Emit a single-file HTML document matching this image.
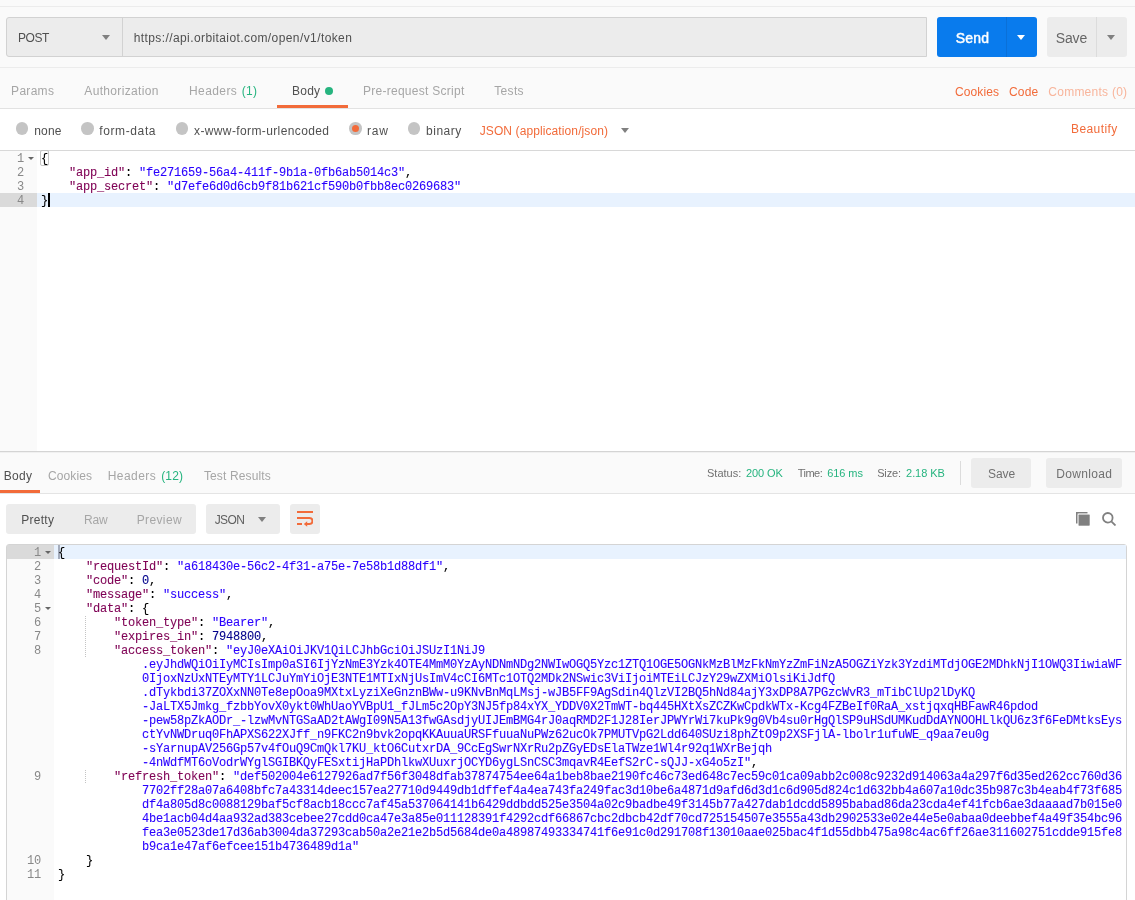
<!DOCTYPE html>
<html lang="en">
<head>
<meta charset="utf-8">
<title>Postman - token request</title>
<style>
html,body{margin:0;padding:0}
body{width:1135px;height:900px;overflow:hidden;position:relative;background:#fff;font-family:"Liberation Sans",Arial,sans-serif;font-size:12px;color:#505050}
.abs,.t,.cl,.ln,.box,.hl{position:absolute}
.t{white-space:pre;line-height:20px;height:20px}
.cl,.ln{font-family:"Liberation Mono",monospace;font-size:12px;letter-spacing:-0.2012px;line-height:14px;height:14px;white-space:pre;color:#000}
.cl{-webkit-text-stroke:0.1px}
.ln{color:#888;text-align:right}
.k{color:#7f0055}.s{color:#2a00ff}.n{color:#00008b}
.hl{left:0;height:1px;width:1135px}
.radio{position:absolute;width:12.6px;height:12.6px;border-radius:50%;background:#c4c4c4}
.tri{position:absolute;width:0;height:0;border-left:4px solid transparent;border-right:4px solid transparent;border-top:5px solid #808080}
.fold{position:absolute;width:0;height:0;border-left:3px solid transparent;border-right:3px solid transparent;border-top:3px solid #666}
</style>
</head>
<body>
<!-- backgrounds -->
<div class="abs" style="left:0;top:0;width:1135px;height:108px;background:#fafafa"></div>
<div class="hl" style="top:6px;background:#ececec"></div>
<div class="hl" style="top:67px;background:#ececec"></div>
<div class="hl" style="top:108px;background:#e2e2e2"></div>
<div class="hl" style="top:150px;background:#d8d8d8"></div>

<!-- url bar -->
<div class="box" style="left:6px;top:17px;width:919px;height:38px;background:#ececec;border:1px solid #d2d2d2;border-radius:3px 0 0 3px"></div>
<div class="abs" style="left:122px;top:18px;width:1px;height:38px;background:#d2d2d2"></div>
<div class="tri" style="left:102px;top:35px"></div>
<!-- send -->
<div class="box" style="left:937px;top:17px;width:100px;height:40px;background:#097bed;border-radius:3px"></div>
<div class="abs" style="left:1006px;top:17px;width:1px;height:40px;background:#0a70d8"></div>
<div class="tri" style="left:1017px;top:35px;border-top-color:#fff"></div>
<!-- save -->
<div class="box" style="left:1047px;top:17px;width:80px;height:40px;background:#ececec;border-radius:3px"></div>
<div class="abs" style="left:1096px;top:17px;width:1px;height:40px;background:#dcdcdc"></div>
<div class="tri" style="left:1107px;top:35px"></div>

<!-- tab underline + dot -->
<div class="abs" style="left:277px;top:105px;width:71px;height:3px;background:#f26b3a"></div>
<div class="abs" style="left:325px;top:87px;width:8px;height:8px;border-radius:50%;background:#26b47f"></div>

<!-- radios -->
<div class="radio" style="left:15.7px;top:122.2px"></div>
<div class="radio" style="left:81.3px;top:122.2px"></div>
<div class="radio" style="left:175.5px;top:122.2px"></div>
<div class="radio" style="left:349.2px;top:122.2px"><div class="abs" style="left:2.8px;top:2.8px;width:7px;height:7px;border-radius:50%;background:#f26b3a"></div></div>
<div class="radio" style="left:407.5px;top:122.2px"></div>
<div class="tri" style="left:621px;top:128px"></div>

<!-- request editor -->
<div class="abs" style="left:0;top:151px;width:37px;height:300px;background:#fafafa"></div>
<div class="abs" style="left:0;top:193px;width:37px;height:14px;background:#dadada"></div>
<div class="abs" style="left:37px;top:193px;width:1098px;height:14px;background:#e8f2fe"></div>
<div class="abs" style="left:40px;top:150px;width:7px;height:14px;border:1px solid #c4c4c4;border-radius:2px"></div>
<div class="abs" style="left:48px;top:193px;width:2px;height:14px;background:#000"></div>
<div class="fold" style="left:28px;top:157px"></div>

<!-- response header -->
<div class="abs" style="left:0;top:451px;width:1135px;height:42px;background:#fafafa"></div>
<div class="hl" style="top:451px;background:#d4d4d4"></div>
<div class="hl" style="top:452px;background:#f0f0f0"></div>
<div class="hl" style="top:493px;background:#e4e4e4"></div>
<div class="abs" style="left:0;top:490px;width:40px;height:3px;background:#f26b3a"></div>
<div class="abs" style="left:960px;top:461px;width:1px;height:24px;background:#dcdcdc"></div>
<div class="box" style="left:971px;top:458px;width:60px;height:30px;background:#ececec;border-radius:3px"></div>
<div class="box" style="left:1046px;top:458px;width:76px;height:30px;background:#ececec;border-radius:3px"></div>

<!-- response toolbar -->
<div class="box" style="left:6px;top:504px;width:190px;height:30px;background:#ececec;border-radius:3px"></div>
<div class="box" style="left:206px;top:504px;width:74px;height:30px;background:#ececec;border-radius:3px"></div>
<div class="tri" style="left:258px;top:517px"></div>
<div class="box" style="left:290px;top:504px;width:30px;height:30px;background:#ececec;border-radius:3px"></div>
<svg class="abs" style="left:297px;top:511px" width="16" height="16" viewBox="0 0 16 16" fill="none" stroke="#f26b3a" stroke-width="2">
<path d="M0 1h16M0 7h12.5a3 3 0 0 1 0 6h-3M0 13h5"/><path d="M6.8 13l3.4-2.7v5.4z" fill="#f26b3a" stroke="none"/></svg>
<!-- copy + search icons -->
<svg class="abs" style="left:1076px;top:512px" width="14" height="14" viewBox="0 0 14 14"><path d="M0.8 11.5V0.8H11.5" fill="none" stroke="#808080" stroke-width="1.6"/><rect x="2.2" y="2.2" width="11.8" height="11.8" rx="1" fill="#808080" stroke="#fff" stroke-width="0.6"/></svg>
<svg class="abs" style="left:1102px;top:512px" width="14" height="14" viewBox="0 0 14 14" fill="none" stroke="#808080" stroke-width="1.8"><circle cx="5.8" cy="5.8" r="4.8"/><path d="M9.3 9.3l4.2 4.2"/></svg>

<!-- response editor -->
<div class="box" style="left:6px;top:544px;width:1119px;height:370px;border:1px solid #d4d4d4;border-radius:3px;background:#fff"></div>
<div class="abs" style="left:7px;top:545px;width:47px;height:355px;background:#fafafa"></div>
<div class="abs" style="left:7px;top:545px;width:47px;height:14px;background:#dadada"></div>
<div class="abs" style="left:54px;top:545px;width:1072px;height:14px;background:#e8f2fe"></div>
<div class="abs" style="left:58px;top:545px;width:2px;height:14px;background:#a4acbc"></div>
<div class="fold" style="left:45px;top:551px"></div>
<div class="fold" style="left:45px;top:607px"></div>
<div class="abs" style="left:85px;top:616px;width:1px;height:42px;background:repeating-linear-gradient(to bottom,#c4c4c4 0,#c4c4c4 1px,transparent 1px,transparent 2px)"></div>
<div class="abs" style="left:85px;top:770px;width:1px;height:14px;background:repeating-linear-gradient(to bottom,#c4c4c4 0,#c4c4c4 1px,transparent 1px,transparent 2px)"></div>

<div id="txt" style="position:absolute;left:0;top:0;width:1135px;height:900px;will-change:transform">
<div class="ln" style="left:0;width:24px;top:152px">1</div>
<div class="ln" style="left:0;width:24px;top:166px">2</div>
<div class="ln" style="left:0;width:24px;top:180px">3</div>
<div class="ln" style="left:0;width:24px;top:194px">4</div>
<div class="ln" style="left:7px;width:34px;top:546px">1</div>
<div class="ln" style="left:7px;width:34px;top:560px">2</div>
<div class="ln" style="left:7px;width:34px;top:574px">3</div>
<div class="ln" style="left:7px;width:34px;top:588px">4</div>
<div class="ln" style="left:7px;width:34px;top:602px">5</div>
<div class="ln" style="left:7px;width:34px;top:616px">6</div>
<div class="ln" style="left:7px;width:34px;top:630px">7</div>
<div class="ln" style="left:7px;width:34px;top:644px">8</div>
<div class="ln" style="left:7px;width:34px;top:770px">9</div>
<div class="ln" style="left:7px;width:34px;top:854px">10</div>
<div class="ln" style="left:7px;width:34px;top:868px">11</div>
<div class="cl" style="left:41px;top:152px">{</div>
<div class="cl" style="left:69px;top:166px"><span class="k">&quot;app_id&quot;</span>: <span class="s">&quot;fe271659-56a4-411f-9b1a-0fb6ab5014c3&quot;</span>,</div>
<div class="cl" style="left:69px;top:180px"><span class="k">&quot;app_secret&quot;</span>: <span class="s">&quot;d7efe6d0d6cb9f81b621cf590b0fbb8ec0269683&quot;</span></div>
<div class="cl" style="left:41px;top:194px">}</div>
<div class="cl" style="left:58px;top:546px">{</div>
<div class="cl" style="left:86px;top:560px"><span class="k">&quot;requestId&quot;</span>: <span class="s">&quot;a618430e-56c2-4f31-a75e-7e58b1d88df1&quot;</span>,</div>
<div class="cl" style="left:86px;top:574px"><span class="k">&quot;code&quot;</span>: <span class="n">0</span>,</div>
<div class="cl" style="left:86px;top:588px"><span class="k">&quot;message&quot;</span>: <span class="s">&quot;success&quot;</span>,</div>
<div class="cl" style="left:86px;top:602px"><span class="k">&quot;data&quot;</span>: {</div>
<div class="cl" style="left:114px;top:616px"><span class="k">&quot;token_type&quot;</span>: <span class="s">&quot;Bearer&quot;</span>,</div>
<div class="cl" style="left:114px;top:630px"><span class="k">&quot;expires_in&quot;</span>: <span class="n">7948800</span>,</div>
<div class="cl" style="left:114px;top:644px"><span class="k">&quot;access_token&quot;</span>: <span class="s">&quot;eyJ0eXAiOiJKV1QiLCJhbGciOiJSUzI1NiJ9</span></div>
<div class="cl" style="left:142px;top:658px"><span class="s">.eyJhdWQiOiIyMCIsImp0aSI6IjYzNmE3Yzk4OTE4MmM0YzAyNDNmNDg2NWIwOGQ5Yzc1ZTQ1OGE5OGNkMzBlMzFkNmYzZmFiNzA5OGZiYzk3YzdiMTdjOGE2MDhkNjI1OWQ3IiwiaWF</span></div>
<div class="cl" style="left:142px;top:672px"><span class="s">0IjoxNzUxNTEyMTY1LCJuYmYiOjE3NTE1MTIxNjUsImV4cCI6MTc1OTQ2MDk2NSwic3ViIjoiMTEiLCJzY29wZXMiOlsiKiJdfQ</span></div>
<div class="cl" style="left:142px;top:686px"><span class="s">.dTykbdi37ZOXxNN0Te8epOoa9MXtxLyziXeGnznBWw-u9KNvBnMqLMsj-wJB5FF9AgSdin4QlzVI2BQ5hNd84ajY3xDP8A7PGzcWvR3_mTibClUp2lDyKQ</span></div>
<div class="cl" style="left:142px;top:700px"><span class="s">-JaLTX5Jmkg_fzbbYovX0ykt0WhUaoYVBpU1_fJLm5c2OpY3NJ5fp84xYX_YDDV0X2TmWT-bq445HXtXsZCZKwCpdkWTx-Kcg4FZBeIf0RaA_xstjqxqHBFawR46pdod</span></div>
<div class="cl" style="left:142px;top:714px"><span class="s">-pew58pZkAODr_-lzwMvNTGSaAD2tAWgI09N5A13fwGAsdjyUIJEmBMG4rJ0aqRMD2F1J28IerJPWYrWi7kuPk9g0Vb4su0rHgQlSP9uHSdUMKudDdAYNOOHLlkQU6z3f6FeDMtksEys</span></div>
<div class="cl" style="left:142px;top:728px"><span class="s">ctYvNWDruq0FhAPXS622XJff_n9FKC2n9bvk2opqKKAuuaURSFfuuaNuPWz62ucOk7PMUTVpG2Ldd640SUzi8phZtO9p2XSFjlA-lbolr1ufuWE_q9aa7eu0g</span></div>
<div class="cl" style="left:142px;top:742px"><span class="s">-sYarnupAV256Gp57v4fOuQ9CmQkl7KU_ktO6CutxrDA_9CcEgSwrNXrRu2pZGyEDsElaTWze1Wl4r92q1WXrBejqh</span></div>
<div class="cl" style="left:142px;top:756px"><span class="s">-4nWdfMT6oVodrWYglSGIBKQyFESxtijHaPDhlkwXUuxrjOCYD6ygLSnCSC3mqavR4EefS2rC-sQJJ-xG4o5zI&quot;</span>,</div>
<div class="cl" style="left:114px;top:770px"><span class="k">&quot;refresh_token&quot;</span>: <span class="s">&quot;def502004e6127926ad7f56f3048dfab37874754ee64a1beb8bae2190fc46c73ed648c7ec59c01ca09abb2c008c9232d914063a4a297f6d35ed262cc760d36</span></div>
<div class="cl" style="left:142px;top:784px"><span class="s">7702ff28a07a6408bfc7a43314deec157ea27710d9449db1dffef4a4ea743fa249fac3d10be6a4871d9afd6d3d1c6d905d824c1d632bb4a607a10dc35b987c3b4eab4f73f685</span></div>
<div class="cl" style="left:142px;top:798px"><span class="s">df4a805d8c0088129baf5cf8acb18ccc7af45a537064141b6429ddbdd525e3504a02c9badbe49f3145b77a427dab1dcdd5895babad86da23cda4ef41fcb6ae3daaaad7b015e0</span></div>
<div class="cl" style="left:142px;top:812px"><span class="s">4be1acb04d4aa932ad383cebee27cdd0ca47e3a85e011128391f4292cdf66867cbc2dbcb42df70cd725154507e3555a43db2902533e02e44e5e0abaa0deebbef4a49f354bc96</span></div>
<div class="cl" style="left:142px;top:826px"><span class="s">fea3e0523de17d36ab3004da37293cab50a2e21e2b5d5684de0a48987493334741f6e91c0d291708f13010aae025bac4f1d55dbb475a98c4ac6ff26ae311602751cdde915fe8</span></div>
<div class="cl" style="left:142px;top:840px"><span class="s">b9ca1e47af6efcee151b4736489d1a&quot;</span></div>
<div class="cl" style="left:86px;top:854px">}</div>
<div class="cl" style="left:58px;top:868px">}</div>
<span class="t" style="left:18.10px;top:27.84px;font-size:12px;color:#505050;font-weight:400;letter-spacing:-0.518px">POST</span>
<span class="t" style="left:133.70px;top:27.84px;font-size:12px;color:#505050;font-weight:400;letter-spacing:0.405px">https://api.orbitaiot.com/open/v1/token</span>
<span class="t" style="left:955.80px;top:28.15px;font-size:14px;color:#fff;font-weight:400;letter-spacing:0.199px;-webkit-text-stroke:0.45px #fff">Send</span>
<span class="t" style="left:1055.70px;top:28.15px;font-size:14px;color:#666;font-weight:400;letter-spacing:-0.130px">Save</span>
<span class="t" style="left:11.10px;top:80.84px;font-size:12px;color:#a6a6a6;font-weight:400;letter-spacing:0.293px">Params</span>
<span class="t" style="left:84.30px;top:80.84px;font-size:12px;color:#a6a6a6;font-weight:400;letter-spacing:0.335px">Authorization</span>
<span class="t" style="left:189.00px;top:80.84px;font-size:12px;color:#a6a6a6;font-weight:400;letter-spacing:0.406px">Headers</span>
<span class="t" style="left:241.70px;top:80.84px;font-size:12px;color:#26b47f;font-weight:400;letter-spacing:0.343px">(1)</span>
<span class="t" style="left:292.10px;top:80.84px;font-size:12px;color:#505050;font-weight:400;letter-spacing:0.210px">Body</span>
<span class="t" style="left:362.90px;top:80.84px;font-size:12px;color:#a6a6a6;font-weight:400;letter-spacing:0.278px">Pre-request Script</span>
<span class="t" style="left:494.20px;top:80.84px;font-size:12px;color:#a6a6a6;font-weight:400;letter-spacing:0.357px">Tests</span>
<span class="t" style="left:955.10px;top:81.84px;font-size:12px;color:#f26b3a;font-weight:400;letter-spacing:0.077px">Cookies</span>
<span class="t" style="left:1009.10px;top:81.84px;font-size:12px;color:#f26b3a;font-weight:400;letter-spacing:0.103px">Code</span>
<span class="t" style="left:1048.30px;top:81.84px;font-size:12px;color:#f8b59c;font-weight:400;letter-spacing:0.249px">Comments (0)</span>
<span class="t" style="left:34.20px;top:120.84px;font-size:12px;color:#505050;font-weight:400;letter-spacing:0.199px">none</span>
<span class="t" style="left:99.30px;top:120.84px;font-size:12px;color:#505050;font-weight:400;letter-spacing:0.605px">form-data</span>
<span class="t" style="left:194.00px;top:120.84px;font-size:12px;color:#505050;font-weight:400;letter-spacing:0.382px">x-www-form-urlencoded</span>
<span class="t" style="left:367.10px;top:120.84px;font-size:12px;color:#505050;font-weight:400;letter-spacing:0.685px">raw</span>
<span class="t" style="left:426.10px;top:120.84px;font-size:12px;color:#505050;font-weight:400;letter-spacing:0.485px">binary</span>
<span class="t" style="left:479.70px;top:120.84px;font-size:12px;color:#f26b3a;font-weight:400;letter-spacing:0.102px">JSON (application/json)</span>
<span class="t" style="left:1071.00px;top:118.84px;font-size:12px;color:#f26b3a;font-weight:400;letter-spacing:0.418px">Beautify</span>
<span class="t" style="left:3.70px;top:465.84px;font-size:12px;color:#505050;font-weight:400;letter-spacing:0.310px">Body</span>
<span class="t" style="left:48.00px;top:465.84px;font-size:12px;color:#a6a6a6;font-weight:400;letter-spacing:0.092px">Cookies</span>
<span class="t" style="left:107.70px;top:465.84px;font-size:12px;color:#a6a6a6;font-weight:400;letter-spacing:0.449px">Headers</span>
<span class="t" style="left:161.20px;top:465.84px;font-size:12px;color:#26b47f;font-weight:400;letter-spacing:0.164px">(12)</span>
<span class="t" style="left:203.90px;top:465.84px;font-size:12px;color:#a6a6a6;font-weight:400;letter-spacing:0.145px">Test Results</span>
<span class="t" style="left:707.00px;top:463.19px;font-size:11px;color:#707070;font-weight:400;letter-spacing:0.007px">Status:</span>
<span class="t" style="left:746.00px;top:463.19px;font-size:11px;color:#26b47f;font-weight:400;letter-spacing:-0.102px">200 OK</span>
<span class="t" style="left:797.70px;top:463.19px;font-size:11px;color:#707070;font-weight:400;letter-spacing:-0.519px">Time:</span>
<span class="t" style="left:827.20px;top:463.19px;font-size:11px;color:#26b47f;font-weight:400;letter-spacing:-0.063px">616 ms</span>
<span class="t" style="left:877.20px;top:463.19px;font-size:11px;color:#707070;font-weight:400;letter-spacing:-0.154px">Size:</span>
<span class="t" style="left:906.10px;top:463.19px;font-size:11px;color:#26b47f;font-weight:400;letter-spacing:-0.077px">2.18 KB</span>
<span class="t" style="left:988.00px;top:463.84px;font-size:12px;color:#707070;font-weight:400;letter-spacing:-0.040px">Save</span>
<span class="t" style="left:1056.20px;top:463.84px;font-size:12px;color:#707070;font-weight:400;letter-spacing:0.353px">Download</span>
<span class="t" style="left:21.20px;top:509.84px;font-size:12px;color:#505050;font-weight:400;letter-spacing:0.276px">Pretty</span>
<span class="t" style="left:84.10px;top:509.84px;font-size:12px;color:#a6a6a6;font-weight:400;letter-spacing:-0.205px">Raw</span>
<span class="t" style="left:136.70px;top:509.84px;font-size:12px;color:#a6a6a6;font-weight:400;letter-spacing:0.373px">Preview</span>
<span class="t" style="left:214.70px;top:509.84px;font-size:12px;color:#606060;font-weight:400;letter-spacing:-0.629px">JSON</span>
</div>
</body>
</html>
